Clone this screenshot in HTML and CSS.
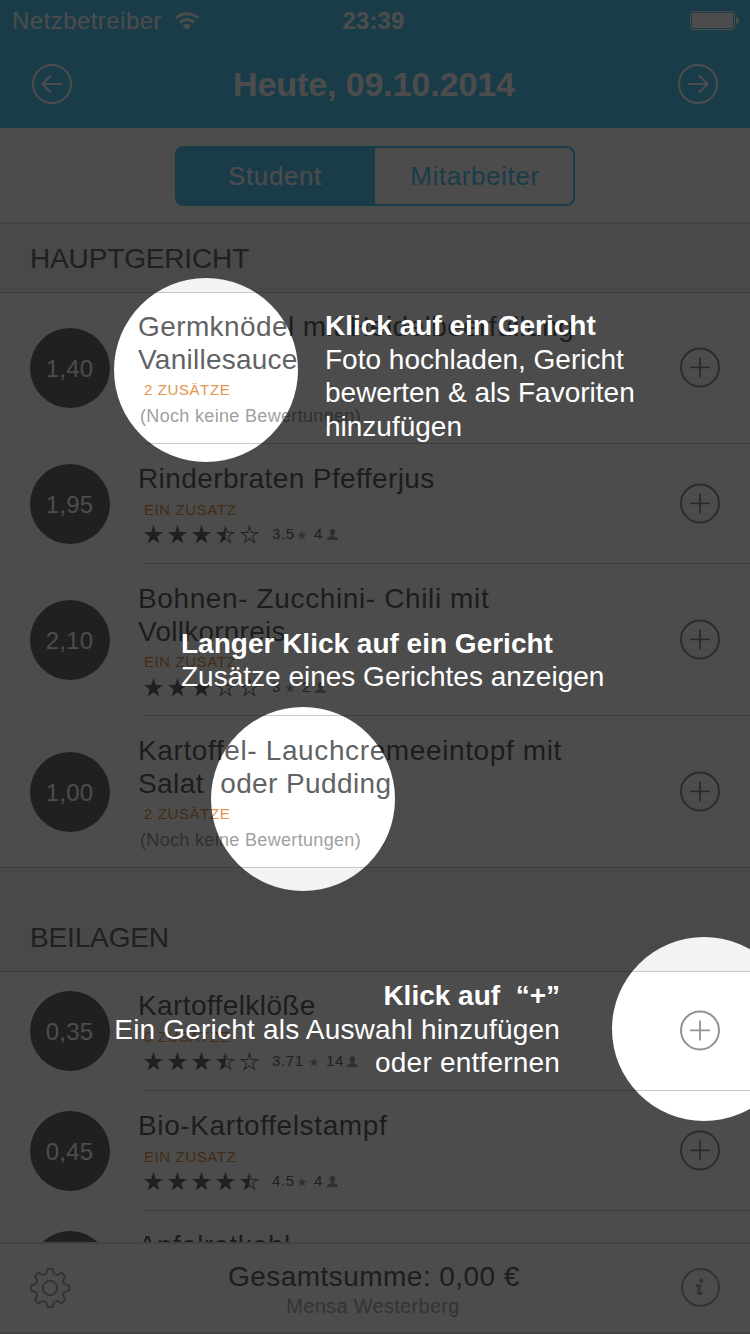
FILE: index.html
```html
<!DOCTYPE html>
<html lang="de">
<head>
<meta charset="utf-8">
<title>Mensa</title>
<link rel="stylesheet" href="styles.css">
</head>
<body>
<svg class="defs" width="0" height="0" aria-hidden="true">
  <defs>
    <path id="star-shape" d="M9 0 L11.2 6.6 H18 L12.5 10.8 L14.6 17.6 L9 13.5 L3.4 17.6 L5.5 10.8 L0 6.6 H6.8 Z"/>
    <symbol id="star-full" viewBox="0 0 18 18"><use href="#star-shape" fill="#6b6b6b"/></symbol>
    <symbol id="star-empty" viewBox="0 0 18 18"><path d="M9 1.5 L10.8 7.1 H16.7 L11.9 10.6 L13.8 16.4 L9 12.9 L4.2 16.4 L6.1 10.6 L1.3 7.1 H7.2 Z" fill="none" stroke="#777" stroke-width="1"/></symbol>
    <symbol id="star-half" viewBox="0 0 18 18"><path d="M9 0 V13.5 L3.4 17.6 L5.5 10.8 L0 6.6 H6.8 Z" fill="#6b6b6b"/><path d="M9 1.5 L10.8 7.1 H16.7 L11.9 10.6 L13.8 16.4 L9 12.9" fill="none" stroke="#777" stroke-width="1"/></symbol>
    <symbol id="star-small" viewBox="0 0 18 18"><use href="#star-shape" fill="#a8a8a8"/></symbol>
    <symbol id="person" viewBox="0 0 11 11"><path d="M5.5 0 C7.6 0 8.4 1.4 8.3 3.1 C8.2 4.6 7.6 5.6 6.8 6.3 V7.3 L9.6 8.3 C10.6 8.7 11 9.4 11 11 H0 C0 9.4 .4 8.7 1.4 8.3 L4.2 7.3 V6.3 C3.4 5.6 2.8 4.6 2.7 3.1 C2.6 1.4 3.4 0 5.5 0 Z" fill="#a0a0a0"/></symbol>
    <symbol id="plus" viewBox="0 0 40 40"><circle cx="20" cy="20.4" r="19" fill="none" stroke="#8e9396" stroke-width="2"/><path d="M10 20.4 H30 M20 10.4 V30.4" stroke="#8e9396" stroke-width="1.8"/></symbol>
    <path id="tooth" d="M-5.5 -13.3 C-4.2 -13.9 -3.7 -14.2 -3.4 -15.6 L-3 -17.8 Q-2.7 -19.1 -1.5 -19.1 H1.5 Q2.7 -19.1 3 -17.8 L3.4 -15.6 C3.7 -14.2 4.2 -13.9 5.5 -13.3"/>
  </defs>
</svg>
<div class="screen">
  <header class="header">
    <div class="status">
      <div class="status-left">
        <span class="carrier">Netzbetreiber</span>
        <svg class="wifi" width="24" height="18" viewBox="0 0 24 18"><g fill="none" stroke="#fff" stroke-width="3"><path d="M1 6.3 A15.6 15.6 0 0 1 23 6.3"/><path d="M4.9 10.4 A10 10 0 0 1 19.1 10.4"/></g><path d="M12 17.9 L7.7 13.6 A6.1 6.1 0 0 1 16.3 13.6 Z" fill="#fff"/></svg>
      </div>
      <span class="clock">23:39</span>
      <svg class="battery" width="49" height="19" viewBox="0 0 49 19"><rect x=".5" y=".5" width="44" height="18" rx="2.5" fill="none" stroke="#fff"/><rect x="2" y="2" width="41" height="15" rx="1" fill="#fff"/><path d="M46 6 Q49 6.5 49 9.5 Q49 12.5 46 13 Z" fill="#fff"/></svg>
    </div>
    <div class="navbar">
      <svg width="40" height="40" viewBox="0 0 40 40" fill="none" stroke="#fff" stroke-width="2"><circle cx="20" cy="20" r="19"/><path d="M30 20 H10.5 M19 11.2 L10.3 20 L19 28.8"/></svg>
      <h1 class="title">Heute, 09.10.2014</h1>
      <svg width="40" height="40" viewBox="0 0 40 40" fill="none" stroke="#fff" stroke-width="2"><circle cx="20" cy="20" r="19"/><path d="M10 20 H29.5 M21 11.2 L29.7 20 L21 28.8"/></svg>
    </div>
  </header>
  <div class="filter">
    <div class="segments">
      <span class="segment segment-active">Student</span>
      <span class="segment">Mitarbeiter</span>
    </div>
  </div>
  <main class="menu">
    <h2 class="section">HAUPTGERICHT</h2>
    <article class="dish dish-first dish-tall">
      <div class="price">1,40</div>
      <div class="info">
        <div class="name">Germknödel mit Heidelbeerfüllung</div>
        <div class="name name-tight">Vanillesauce</div>
        <div class="tag">2 ZUSÄTZE</div>
        <div class="unrated">(Noch keine Bewertungen)</div>
      </div>
      <svg class="add"><use href="#plus"/></svg>
    </article>
    <article class="dish">
      <div class="price">1,95</div>
      <div class="info">
        <div class="name">Rinderbraten Pfefferjus</div>
        <div class="tag">EIN ZUSATZ</div>
        <div class="rating">
          <div class="stars"><svg><use href="#star-full"/></svg><svg><use href="#star-full"/></svg><svg><use href="#star-full"/></svg><svg><use href="#star-half"/></svg><svg><use href="#star-empty"/></svg></div>
          <span class="score">3.5</span><svg class="mini"><use href="#star-small"/></svg><span class="votes">4</span><svg class="mini user"><use href="#person"/></svg>
        </div>
      </div>
      <svg class="add"><use href="#plus"/></svg>
    </article>
    <article class="dish dish-tall">
      <div class="price">2,10</div>
      <div class="info">
        <div class="name name-wide">Bohnen- Zucchini- Chili mit</div>
        <div class="name name-tight">Vollkornreis</div>
        <div class="tag">EIN ZUSATZ</div>
        <div class="rating">
          <div class="stars"><svg><use href="#star-full"/></svg><svg><use href="#star-full"/></svg><svg><use href="#star-full"/></svg><svg><use href="#star-empty"/></svg><svg><use href="#star-empty"/></svg></div>
          <span class="score score-short">3</span><svg class="mini"><use href="#star-small"/></svg><span class="votes">2</span><svg class="mini user"><use href="#person"/></svg>
        </div>
      </div>
      <svg class="add"><use href="#plus"/></svg>
    </article>
    <article class="dish dish-tall dish-last">
      <div class="price">1,00</div>
      <div class="info">
        <div class="name name-wide">Kartoffel- Lauchcremeeintopf mit</div>
        <div class="name">Salat  oder Pudding</div>
        <div class="tag">2 ZUSÄTZE</div>
        <div class="unrated">(Noch keine Bewertungen)</div>
      </div>
      <svg class="add"><use href="#plus"/></svg>
    </article>
    <h2 class="section section-next">BEILAGEN</h2>
    <article class="dish dish-first">
      <div class="price">0,35</div>
      <div class="info">
        <div class="name">Kartoffelklöße</div>
        <div class="tag">0 ZUSÄTZE</div>
        <div class="rating">
          <div class="stars"><svg><use href="#star-full"/></svg><svg><use href="#star-full"/></svg><svg><use href="#star-full"/></svg><svg><use href="#star-half"/></svg><svg><use href="#star-empty"/></svg></div>
          <span class="score score-long">3.71</span><svg class="mini"><use href="#star-small"/></svg><span class="votes votes-long">14</span><svg class="mini user"><use href="#person"/></svg>
        </div>
      </div>
      <svg class="add"><use href="#plus"/></svg>
    </article>
    <article class="dish">
      <div class="price">0,45</div>
      <div class="info">
        <div class="name name-wide">Bio-Kartoffelstampf</div>
        <div class="tag">EIN ZUSATZ</div>
        <div class="rating">
          <div class="stars"><svg><use href="#star-full"/></svg><svg><use href="#star-full"/></svg><svg><use href="#star-full"/></svg><svg><use href="#star-full"/></svg><svg><use href="#star-half"/></svg></div>
          <span class="score">4.5</span><svg class="mini"><use href="#star-small"/></svg><span class="votes">4</span><svg class="mini user"><use href="#person"/></svg>
        </div>
      </div>
      <svg class="add"><use href="#plus"/></svg>
    </article>
    <article class="dish">
      <div class="price"></div>
      <div class="info">
        <div class="name">Apfelrotkohl</div>
      </div>
    </article>
  </main>
  <footer class="footer">
    <svg width="40" height="40" viewBox="-20 -20 40 40" fill="none" stroke="#aaa" stroke-width="1.9"><use href="#tooth"/><use href="#tooth" transform="rotate(45)"/><use href="#tooth" transform="rotate(90)"/><use href="#tooth" transform="rotate(135)"/><use href="#tooth" transform="rotate(180)"/><use href="#tooth" transform="rotate(225)"/><use href="#tooth" transform="rotate(270)"/><use href="#tooth" transform="rotate(315)"/><circle r="7.2"/></svg>
    <div class="sum">
      <div class="total">Gesamtsumme: 0,00 €</div>
      <div class="place">Mensa Westerberg</div>
    </div>
    <svg width="40" height="40" viewBox="0 0 40 40"><circle cx="20.5" cy="19.5" r="18.5" fill="none" stroke="#aaa" stroke-width="2"/><circle cx="21.3" cy="12.8" r="2.2" fill="#aaa"/><path d="M15.8 17.8 H20 L18.5 23.6 Q18 26 19.7 25.8 Q20.8 25.6 22.2 24.4" fill="none" stroke="#aaa" stroke-width="3"/></svg>
  </footer>

  <!-- Dimmed layer with three round cut-outs -->
  <svg class="dim" width="750" height="1334" viewBox="0 0 750 1334"><path fill-rule="evenodd" d="M0 0 H750 V1334 H0 Z M114 370 a92 92 0 1 0 184 0 a92 92 0 1 0 -184 0 Z M211 799 a92 92 0 1 0 184 0 a92 92 0 1 0 -184 0 Z M612 1029 a92 92 0 1 0 184 0 a92 92 0 1 0 -184 0 Z"/></svg>
  <div class="hint hint-click"><b>Klick auf ein Gericht</b><br>Foto hochladen, Gericht<br>bewerten &amp; als Favoriten<br>hinzufügen</div>
  <div class="hint hint-hold"><b>Langer Klick auf ein Gericht</b><br>Zusätze eines Gerichtes anzeigen</div>
  <div class="hint hint-plus"><b>Klick auf  “+”</b><br>Ein Gericht als Auswahl hinzufügen<br>oder entfernen</div>
</div>
</body>
</html>
```
FILE: styles.css
```css
* { box-sizing: border-box; }
body { margin: 0; font-family: "Liberation Sans", Arial, sans-serif; color: #5f6366; }
svg { display: block; flex: none; }
.defs { position: absolute; }
h1, h2 { margin: 0; font-weight: normal; }

.screen { position: relative; width: 750px; height: 1334px; overflow: hidden; display: flex; flex-direction: column; background: #fff; }

.header { flex: none; height: 128px; background: #57caf2; color: #fff; }
.status { height: 40px; padding: 0 11px 0 12px; display: grid; grid-template-columns: 1fr auto 1fr; align-items: center; font-size: 24px; line-height: 40px; }
.status-left { display: flex; align-items: center; gap: 13px; }
.carrier { letter-spacing: .45px; padding-top: 1px; }
.clock { font-weight: bold; letter-spacing: .1px; padding: 1px 4px 0 0; }
.battery { justify-self: end; }
.navbar { height: 88px; padding: 0 32px; display: flex; justify-content: space-between; align-items: center; }
.title { font-size: 34px; font-weight: bold; line-height: 40px; letter-spacing: -.1px; padding: 0 2px 1px 0; }

.filter { flex: none; height: 96px; padding-top: 18px; border-bottom: 2px solid #dcdcdc; display: flex; justify-content: center; }
.segments { width: 400px; height: 60px; border: 2px solid #57caf2; border-radius: 8px; display: flex; overflow: hidden; }
.segment { flex: 0 0 198px; text-align: center; font-size: 26px; line-height: 57px; letter-spacing: .6px; color: #57caf2; padding-left: 2px; }
.segment-active { background: #57caf2; color: #fff; padding: 0 2px 0 0; }

.menu { flex: 1; min-height: 0; overflow: hidden; display: flex; flex-direction: column; }
.section { flex: none; height: 69px; padding: 0 30px 19px; display: flex; align-items: flex-end; font-size: 28px; line-height: 28px; letter-spacing: -.15px; background: #f3f3f3; border-bottom: 1px solid #c8c7cc; color: #6b6b6b; }
.section-next { height: 104px; }
.dish { flex: none; height: 120px; padding: 0 30px; display: flex; align-items: flex-start; background: linear-gradient(#c8c7cc, #c8c7cc) 144px 100% / 606px 1px no-repeat; }
.dish-tall { height: 152px; }
.dish-first { height: 119px; }
.dish-first.dish-tall { height: 151px; }
.dish-last { background-size: 750px 1px; background-position: 0 100%; }
.price { flex: none; width: 80px; height: 80px; margin-top: 20px; padding-right: 1px; border-radius: 50%; background: #6b6b6b; color: #fff; font-size: 24px; letter-spacing: .25px; line-height: 81px; text-align: center; }
.add { width: 40px; height: 40px; margin-top: 39px; overflow: visible; }
.add use { overflow: visible; }
.dish-tall .price { margin-top: 36px; }
.dish-tall .add { margin-top: 55px; }
.dish-first .price { margin-top: 19px; }
.dish-first .add { margin-top: 38px; }
.dish-first.dish-tall .price { margin-top: 35px; }
.dish-first.dish-tall .add { margin-top: 54px; }
#plus { overflow: visible; }
.info { flex: 1; align-self: stretch; padding: 18px 0 0 28px; }
.dish-first .info { padding-top: 17px; }
.name { font-size: 28px; line-height: 33px; letter-spacing: .4px; white-space: pre; }
.name-tight { letter-spacing: .25px; }
.name-wide { letter-spacing: .62px; }
.tag { margin: 6px 0 0 6px; font-size: 15px; line-height: 18px; letter-spacing: .6px; color: #e0954d; }
.dish-tall .tag { margin-top: 5px; }
.unrated { margin: 6px 0 0 2px; font-size: 18px; line-height: 22px; letter-spacing: .33px; color: #a0a0a0; }
.rating { margin: 6px 0 0 6px; display: flex; font-size: 15px; line-height: 18px; letter-spacing: .6px; color: #6b6b6b; }
.dish-tall .rating { margin-top: 7px; }
.stars { display: flex; gap: 5px; margin: 0 13px 0 0; }
.stars svg { width: 19px; height: 19px; }
.score { width: 25px; }
.score-short { width: 13px; }
.score-long { width: 37px; }
.mini { width: 10px; height: 10px; margin-top: 5px; }
.votes { width: 13px; margin-left: 7px; }
.votes-long { width: 21px; }
.user { width: 11px; height: 11px; margin-top: 4px; }

.footer { flex: none; height: 92px; padding: 0 30px; display: flex; justify-content: space-between; align-items: center; background: #fdfdfd; border-top: 2px solid #dcdcdc; border-bottom: 2px solid #e4e2e3; }
.sum { text-align: center; padding: 2px 2px 0 0; }
.total { font-size: 28px; line-height: 34px; letter-spacing: .45px; color: #666; }
.place { font-size: 20px; line-height: 24px; letter-spacing: .3px; color: #b0b0b0; padding-right: 2px; }

.dim { position: absolute; inset: 0; fill: #000; fill-opacity: .7; }
.hint { position: absolute; font-size: 28px; line-height: 33.6px; color: #fff; white-space: pre; }
.hint-click { left: 325px; top: 309px; }
.hint-hold { left: 181px; top: 627px; line-height: 33px; }
.hint-plus { right: 190px; top: 979px; text-align: right; letter-spacing: .2px; }
.hint-plus b { letter-spacing: 0; }
```
